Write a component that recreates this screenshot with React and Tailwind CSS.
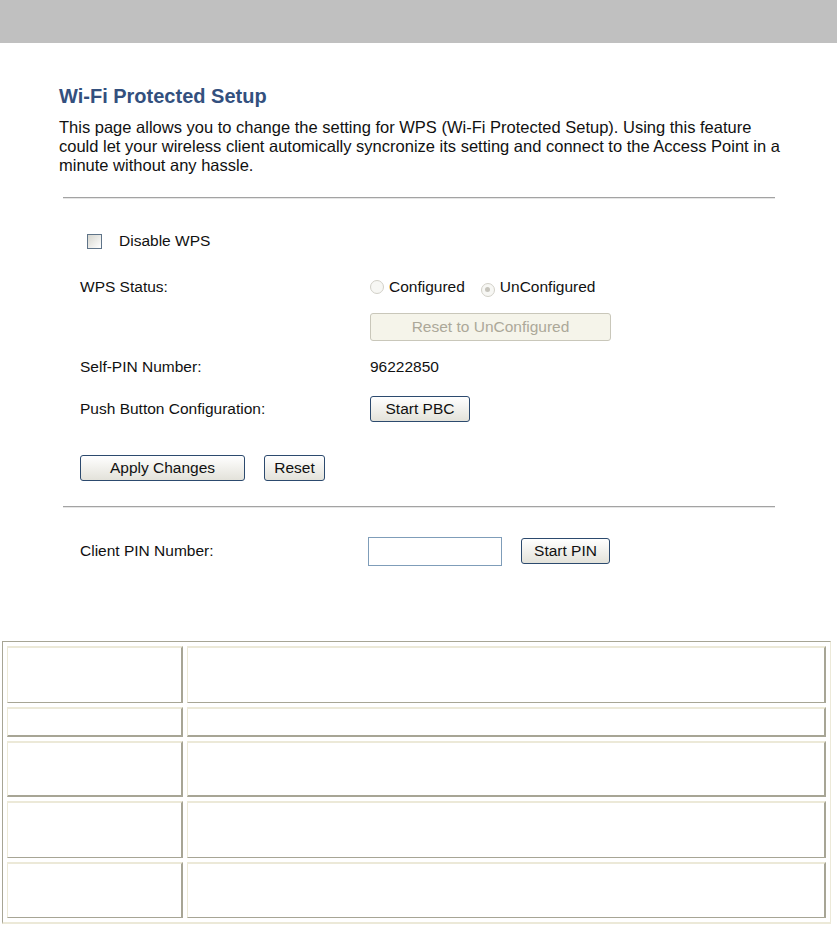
import React from "react";

const font = { fontFamily: '"Liberation Sans", Arial, sans-serif' };

const XpButton = ({ children, className = "", disabled = false }) => (
  <button
    disabled={disabled}
    className={
      "h-[26px] rounded-[3px] border text-[15.5px] leading-none " +
      (disabled
        ? "border-[#c9c7ba] bg-[#f5f4ea] text-[#aca899] "
        : "border-[#2c4a6e] bg-gradient-to-b from-white to-[#e3e2da] text-[#111] ") +
      className
    }
  >
    {children}
  </button>
);

const Radio = ({ checked }) => (
  <span className="inline-flex h-[14px] w-[14px] items-center justify-center rounded-full border border-[#d2d0c8] bg-[#f7f7f4]">
    {checked && <span className="h-[5px] w-[5px] rounded-full bg-[#c6c4bc]" />}
  </span>
);

const Cell = ({ className = "" }) => (
  <div
    className={
      "border-t-2 border-l border-t-[#ece9d8] border-l-[#ece9d8] border-r-2 border-r-[#a7a595] border-b border-b-[#a7a595] bg-white " +
      className
    }
  />
);

export default function App() {
  return (
    <div className="min-h-screen bg-white text-[#111]" style={font}>
      <div className="h-[43px] bg-[#c0c0c0]" />

      <div className="pl-[59px]">
        <h1 className="mt-[41px] text-[20px] font-bold leading-[24px] text-[#33507e]">
          Wi-Fi Protected Setup
        </h1>
        <p className="mt-[10px] text-[16.5px] leading-[19px]">
          This page allows you to change the setting for WPS (Wi-Fi Protected Setup). Using this feature
          <br />
          could let your wireless client automically syncronize its setting and connect to the Access Point in a
          <br />
          minute without any hassle.
        </p>

        <div className="ml-[4px] mt-[22px] w-[712px] border-t border-b border-t-[#a3a3a3] border-b-[#e6e6e6]" />

        <div className="pl-[21px] text-[15.5px]">
          <div className="mt-[27px] flex h-[30px] items-center">
            <span className="ml-[7px] h-[15px] w-[15px] border border-[#5f7489] bg-gradient-to-br from-[#d6d6cf] to-white" />
            <span className="ml-[17px]">Disable WPS</span>
          </div>

          <div className="mt-[16px] flex h-[30px] items-center">
            <span className="w-[290px]">WPS Status:</span>
            <Radio />
            <span className="ml-[5px]">Configured</span>
            <span className="ml-[16px]"><Radio checked /></span>
            <span className="ml-[5px]">UnConfigured</span>
          </div>

          <div className="mt-[11px] flex h-[28px] items-center">
            <span className="w-[290px]" />
            <XpButton disabled className="h-[28px] w-[241px]">Reset to UnConfigured</XpButton>
          </div>

          <div className="mt-[11px] flex h-[30px] items-center">
            <span className="w-[290px]">Self-PIN Number:</span>
            <span>96222850</span>
          </div>

          <div className="mt-[12px] flex h-[30px] items-center">
            <span className="w-[290px]">Push Button Configuration:</span>
            <XpButton className="w-[100px] border-[#1c3c6a]">Start PBC</XpButton>
          </div>

          <div className="mt-[31px] flex h-[26px] items-center gap-[19px]">
            <XpButton className="w-[165px]">Apply Changes</XpButton>
            <XpButton className="w-[61px]">Reset</XpButton>
          </div>
        </div>

        <div className="ml-[4px] mt-[25px] w-[712px] border-t border-b border-t-[#a3a3a3] border-b-[#e6e6e6]" />

        <div className="mt-[28px] flex h-[30px] items-center pl-[21px] text-[15.5px]">
          <span className="w-[288px]">Client PIN Number:</span>
          <input className="h-[29px] w-[134px] border border-[#7f9db9] bg-white outline-none" />
          <XpButton className="ml-[19px] w-[89px]">Start PIN</XpButton>
        </div>
      </div>

      <div className="ml-[2px] mt-[75px] w-[829px] border-t border-l border-t-[#a7a595] border-l-[#a7a595] border-r border-b-2 border-r-[#ece9d8] border-b-[#ece9d8] p-[4px]">
        <div className="grid grid-cols-[176px_1fr] gap-x-[4px] gap-y-[4px]">
          <Cell className="h-[57px]" />
          <Cell className="h-[57px]" />
          <Cell className="h-[30px] border-b-2" />
          <Cell className="h-[30px] border-b-2" />
          <Cell className="h-[56px] border-b-2" />
          <Cell className="h-[56px] border-b-2" />
          <Cell className="h-[57px]" />
          <Cell className="h-[57px]" />
          <Cell className="h-[56px]" />
          <Cell className="h-[56px]" />
        </div>
      </div>
    </div>
  );
}
